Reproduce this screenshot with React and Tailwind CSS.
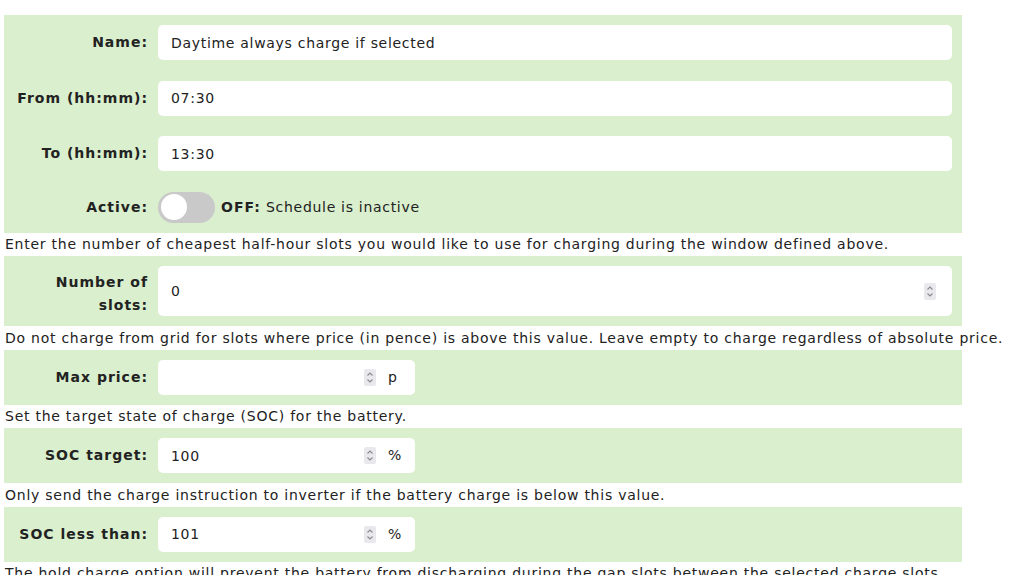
import React from 'react';

const font = { fontFamily: '"DejaVu Sans", Verdana, sans-serif' };

const Spinner = () => (
  <span className="flex h-[17px] w-[12px] items-center justify-center rounded-[2px] bg-[#e9e9ed]">
    <svg width="8" height="13" viewBox="0 0 8 13" fill="none" stroke="#8a8a8e" strokeWidth="1.1">
      <path d="M1.5 4.5 L4 2 L6.5 4.5" />
      <path d="M1.5 8.5 L4 11 L6.5 8.5" />
    </svg>
  </span>
);

const Label = ({ children, extra = '' }) => (
  <label className={`block w-[136px] shrink-0 text-right font-bold leading-[23px] tracking-[1px] text-[#222] ${extra}`}>{children}</label>
);

const TextRow = ({ label, value }) => (
  <div className="flex items-center gap-[10px]">
    <Label>{label}</Label>
    <input
      type="text"
      defaultValue={value}
      className="h-[35px] flex-1 rounded-[5px] bg-white px-[13px] text-[14px] tracking-[0.7px] text-[#222] outline-none"
      style={font}
    />
  </div>
);

const UnitRow = ({ label, value, unit }) => (
  <div className="flex h-[55px] items-center gap-[10px] px-[8px]">
    <Label>{label}</Label>
    <div className="flex h-[35px] w-[257px] items-center rounded-[5px] bg-white">
      <input
        type="text"
        defaultValue={value}
        className="h-full w-0 flex-1 bg-transparent pl-[13px] text-[14px] tracking-[0.7px] text-[#222] outline-none"
        style={font}
      />
      <Spinner />
      <span className="ml-[12px] w-[27px] text-[#222]">{unit}</span>
    </div>
  </div>
);

const Desc = ({ children }) => (
  <p className="whitespace-nowrap pl-[1px] pt-[0.5px] leading-[23px] tracking-[0.75px] text-[#222]">{children}</p>
);

export default function App() {
  return (
    <div className="min-h-screen bg-white px-[4px] pt-[15px] text-[14px]" style={font}>
      <div className="w-[958px] bg-[#d9efcd]">
        <div className="flex flex-col gap-[20.5px] py-[10px] pl-[8px] pr-[10px]">
          <TextRow label="Name:" value="Daytime always charge if selected" />
          <TextRow label="From (hh:mm):" value="07:30" />
          <TextRow label="To (hh:mm):" value="13:30" />
          <div className="flex items-center gap-[10px]">
            <Label>Active:</Label>
            <div className="flex items-center gap-[6px]">
              <button className="relative h-[31px] w-[57px] rounded-full bg-[#c9c9c9]">
                <span className="absolute left-[3px] top-[2.5px] h-[26px] w-[26px] rounded-full bg-white" />
              </button>
              <span className="tracking-[0.7px] text-[#222]">
                <b className="tracking-[1px]">OFF:</b> Schedule is inactive
              </span>
            </div>
          </div>
        </div>
      </div>

      <Desc>Enter the number of cheapest half-hour slots you would like to use for charging during the window defined above.</Desc>
      <div className="w-[958px] bg-[#d9efcd]">
        <div className="flex h-[70px] items-center gap-[10px] pl-[8px] pr-[10px]">
          <Label extra="pt-[5px]">Number of slots:</Label>
          <div className="flex h-[50px] flex-1 items-center rounded-[5px] bg-white pr-[16px]">
            <input
              type="text"
              defaultValue="0"
              className="h-full w-0 flex-1 bg-transparent pl-[13px] text-[14px] tracking-[0.7px] text-[#222] outline-none"
              style={font}
            />
            <Spinner />
          </div>
        </div>
      </div>

      <Desc>Do not charge from grid for slots where price (in pence) is above this value. Leave empty to charge regardless of absolute price.</Desc>
      <div className="w-[958px] bg-[#d9efcd]">
        <UnitRow label="Max price:" value="" unit="p" />
      </div>

      <Desc>Set the target state of charge (SOC) for the battery.</Desc>
      <div className="w-[958px] bg-[#d9efcd]">
        <UnitRow label="SOC target:" value="100" unit="%" />
      </div>

      <Desc>Only send the charge instruction to inverter if the battery charge is below this value.</Desc>
      <div className="w-[958px] bg-[#d9efcd]">
        <UnitRow label="SOC less than:" value="101" unit="%" />
      </div>

      <Desc>The hold charge option will prevent the battery from discharging during the gap slots between the selected charge slots.</Desc>
    </div>
  );
}
